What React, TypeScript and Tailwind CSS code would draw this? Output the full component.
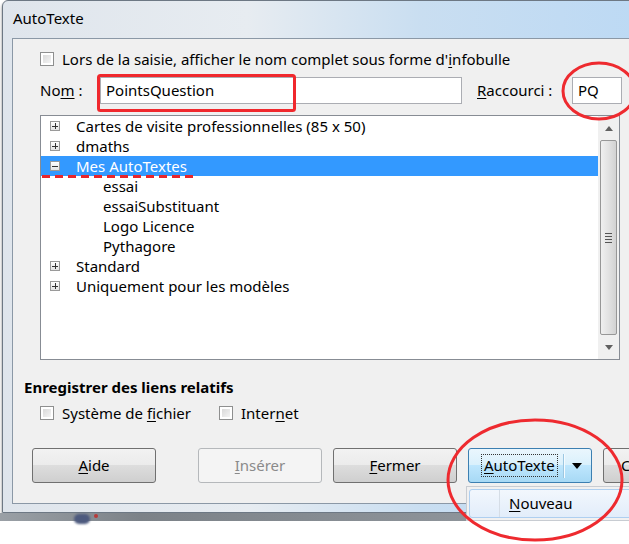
import type { ReactNode } from "react";

const font = { fontFamily: '"Noto Sans", "Segoe UI", sans-serif' };

function Mnemonic({ text, at }: { text: string; at: number }) {
  return (
    <>
      {text.slice(0, at)}
      <span className="underline underline-offset-2">{text[at]}</span>
      {text.slice(at + 1)}
    </>
  );
}

function Checkbox() {
  return (
    <span className="inline-block h-[14px] w-[14px] shrink-0 border border-[#8e8f8f] bg-white p-[2px]">
      <span className="block h-full w-full bg-[linear-gradient(135deg,#d9d9d9,#f4f4f4)]" />
    </span>
  );
}

function Button({
  children,
  disabled,
  className = "",
}: {
  children: ReactNode;
  disabled?: boolean;
  className?: string;
}) {
  const look = disabled
    ? "border-[#b5b8bb] bg-[#f4f4f4] text-[#8a8a8a]"
    : "border-[#707070] bg-[linear-gradient(#f2f2f2,#ebebeb_50%,#dddddd_50%,#cfcfcf)] text-black";
  return (
    <div
      className={`flex h-[35px] w-[124px] shrink-0 items-center justify-center rounded-[3px] border ${look} ${className}`}
    >
      {children}
    </div>
  );
}

function Expander({ open }: { open?: boolean }) {
  return (
    <span className="relative inline-block h-[10px] w-[10px] border border-[#9a9a9a] bg-[linear-gradient(#ffffff,#e4e4e4)]">
      <span className="absolute left-[1px] top-[3.5px] h-px w-[6px] bg-[#333]" />
      {!open ? (
        <span className="absolute left-[3.5px] top-[1px] h-[6px] w-px bg-[#333]" />
      ) : null}
    </span>
  );
}

type Row = { label: string; depth: 0 | 1; open?: boolean; selected?: boolean };

const rows: Row[] = [
  { label: "Cartes de visite professionnelles (85 x 50)", depth: 0 },
  { label: "dmaths", depth: 0 },
  { label: "Mes AutoTextes", depth: 0, open: true, selected: true },
  { label: "essai", depth: 1 },
  { label: "essaiSubstituant", depth: 1 },
  { label: "Logo Licence", depth: 1 },
  { label: "Pythagore", depth: 1 },
  { label: "Standard", depth: 0 },
  { label: "Uniquement pour les modèles", depth: 0 },
];

function Tree() {
  return (
    <div className="ml-[27px] mt-[11px] flex h-[245px] w-[580px] border border-[#878c94] bg-white">
      <div className="flex-1">
        {rows.map((row) => (
          <div
            key={row.label}
            className={`flex h-[20px] items-center ${
              row.selected ? "bg-[#3399ff] text-white" : "text-black"
            }`}
          >
            {row.depth === 0 ? (
              <>
                <span className="ml-[9px] flex w-[26px]">
                  <Expander open={row.open} />
                </span>
                <span>{row.label}</span>
              </>
            ) : (
              <span className="ml-[62px]">{row.label}</span>
            )}
          </div>
        ))}
      </div>
      <div className="flex w-[21px] flex-col items-center bg-[#f0f0f0] py-[2px]">
        <div className="flex h-[20px] items-center justify-center">
          <svg width="8" height="5" viewBox="0 0 8 5">
            <path d="M0 5 L4 0 L8 5 Z" fill="#606060" />
          </svg>
        </div>
        <div className="mt-[2px] flex h-[195px] w-[17px] items-center justify-center rounded-[2px] border border-[#979797] bg-[linear-gradient(90deg,#f0f0f0,#e2e2e2_50%,#d2d2d2)]">
          <div className="flex flex-col gap-[2px]">
            <span className="block h-px w-[7px] bg-[#555]" />
            <span className="block h-px w-[7px] bg-[#555]" />
            <span className="block h-px w-[7px] bg-[#555]" />
            <span className="block h-px w-[7px] bg-[#555]" />
          </div>
        </div>
        <div className="mt-[2px] flex h-[20px] items-center justify-center">
          <svg width="8" height="5" viewBox="0 0 8 5">
            <path d="M0 0 L8 0 L4 5 Z" fill="#606060" />
          </svg>
        </div>
      </div>
    </div>
  );
}

export default function App() {
  return (
    <div
      className="relative h-[544px] w-[629px] overflow-hidden bg-white text-[15px] leading-none text-black"
      style={font}
    >
      <div className="ml-[2px] w-[700px] rounded-tl-[6px] border border-[#6d7884] bg-[linear-gradient(90deg,#dfe5ec,#e7ecf1_35%,#c9def1_60%,#b9d8f5)] pb-[8px] pl-[9px] shadow-[0_2px_3px_rgba(0,0,0,0.5)]">
        <div className="flex h-[37px] items-center pl-[1px] pb-[2px] text-[15px]">
          AutoTexte
        </div>
        <div className="h-[466px] border border-[#8b98a6] bg-[#f0f0f0]">
          {/* tooltip option */}
          <div className="ml-[27px] mt-[10px] flex h-[20px] items-center gap-[8px]">
            <Checkbox />
            <span>
              Lors de la saisie, afficher le nom complet sous forme d'
              <Mnemonic text="infobulle" at={0} />
            </span>
          </div>

          {/* name + shortcut */}
          <div className="mt-[8px] flex h-[27px] items-center">
            <span className="ml-[27px] w-[60px]">
              <Mnemonic text="Nom :" at={2} />
            </span>
            <div className="flex h-[27px] w-[362px] items-center border border-[#abadb3] bg-white pl-[5px]">
              PointsQuestion
            </div>
            <span className="ml-[15px] w-[95px]">
              <Mnemonic text="Raccourci :" at={0} />
            </span>
            <div className="flex h-[27px] w-[50px] items-center border border-[#abadb3] bg-white pl-[5px]">
              PQ
            </div>
          </div>

          <Tree />

          <div className="ml-[11px] mt-[17px] flex h-[20px] items-center font-bold">
            Enregistrer des liens relatifs
          </div>
          <div className="ml-[27px] mt-[6px] flex h-[20px] items-center">
            <Checkbox />
            <span className="ml-[8px] w-[157px]">
              Système de <Mnemonic text="fichier" at={0} />
            </span>
            <Checkbox />
            <span className="ml-[8px]">
              <Mnemonic text="Internet" at={5} />
            </span>
          </div>

          <div className="mt-[25px] flex items-center">
            <Button className="ml-[19px]">
              <Mnemonic text="Aide" at={0} />
            </Button>
            <Button disabled className="ml-[42px]">
              <Mnemonic text="Insérer" at={0} />
            </Button>
            <Button className="ml-[11px]">
              <Mnemonic text="Fermer" at={0} />
            </Button>
            <div className="ml-[11px] flex h-[35px] w-[124px] shrink-0 items-center rounded-[3px] border border-[#3c7fb1] bg-[linear-gradient(#eaf6fd,#d9f0fc_50%,#bee6fd_50%,#a7d9f5)]">
              <span className="ml-[12px] border border-dotted border-[#333] px-[2px] py-[3px]">
                <Mnemonic text="AutoTexte" at={0} />
              </span>
              <span className="ml-[6px] h-[24px] w-px bg-[#f4fbff] shadow-[-1px_0_0_#9cc7e2]" />
              <svg className="ml-[7px]" width="10" height="6" viewBox="0 0 10 6">
                <path d="M0 0 L10 0 L5 6 Z" fill="#000" />
              </svg>
            </div>
            <Button className="ml-[11px]">Catégories...</Button>
          </div>
        </div>
      </div>

      {/* desktop strip under the window */}
      <div className="absolute left-0 top-[513px] h-[8px] w-[470px] bg-[linear-gradient(90deg,#9aa0a6,#7c8288_30%,#8e949a)]">
        <span className="absolute left-[74px] top-[1px] h-[10px] w-[16px] rounded-full bg-[#4d5a7e] blur-[1px]" />
        <span className="absolute left-[94px] top-[1px] h-[4px] w-[4px] rounded-full bg-[#b83a3a] blur-[0.5px]" />
      </div>

      {/* dropdown menu */}
      <div className="absolute left-[466px] top-[486px] h-[35px] w-[200px] border border-[#c8ccd2] bg-[#f1f1f1] p-[2px]">
        <div className="flex h-full items-center rounded-[3px] border border-[#aecff0] bg-[linear-gradient(#f2f7fd,#e2edfa)]">
          <span className="ml-[29px] h-full w-px bg-[#d5dde6]" />
          <span className="ml-[9px]">
            <Mnemonic text="Nouveau" at={0} />
          </span>
        </div>
      </div>

      {/* red annotations */}
      <svg
        className="pointer-events-none absolute left-0 top-0"
        width="629"
        height="544"
        viewBox="0 0 629 544"
      >
        <rect
          x="98.5"
          y="75.5"
          width="196"
          height="35"
          rx="2"
          fill="none"
          stroke="#f0282d"
          strokeWidth="3"
        />
        <line
          x1="42"
          y1="176.5"
          x2="198"
          y2="176.5"
          stroke="#e8262b"
          strokeWidth="3"
          strokeDasharray="8 5"
        />
        <ellipse
          cx="599"
          cy="91"
          rx="36"
          ry="28"
          fill="none"
          stroke="#ee2a2f"
          strokeWidth="3"
        />
        <ellipse
          cx="535"
          cy="480"
          rx="87"
          ry="60"
          fill="none"
          stroke="#ee2a2f"
          strokeWidth="3"
        />
      </svg>
    </div>
  );
}
